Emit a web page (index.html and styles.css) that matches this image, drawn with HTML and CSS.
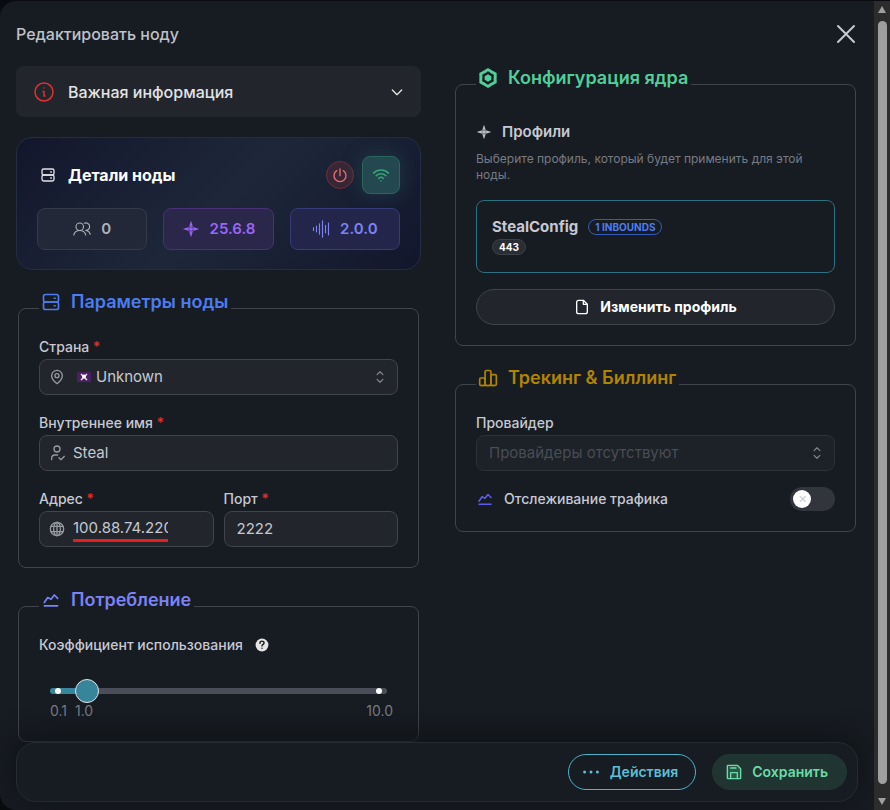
FILE: index.html
```html
<!DOCTYPE html>
<html lang="ru">
<head>
<meta charset="utf-8">
<meta name="viewport" content="width=device-width, initial-scale=1">
<title>Редактировать ноду</title>
<link rel="stylesheet" href="styles.css">
</head>
<body>
<svg class="sprite" aria-hidden="true">
  <symbol id="chart" viewBox="0 0 24 24"><path d="M4 19h16M4 15l4-6 4 2 4-5 4 4"/></symbol>
  <symbol id="updown" viewBox="0 0 24 24"><path d="M7 8l5-5 5 5M7 16l5 5 5-5"/></symbol>
  <symbol id="server" viewBox="0 0 24 24"><rect x="3" y="3" width="18" height="9" rx="2.500"/><rect x="3" y="12" width="18" height="9" rx="2.500"/><path d="M16 7.500h1M16 16.500h1"/></symbol>
  <symbol id="star" viewBox="0 0 24 24"><path fill="currentColor" stroke="none" fill-rule="evenodd" d="M12 1l2.600 8.400L23 12l-8.400 2.600L12 23l-2.600-8.400L1 12l8.400-2.600zM11 7l-1 3-3 1h4zM13 7v4h4l-3-1zM7 13l3 1 1 3v-4zM13 13v4l1-3 3-1z"/></symbol>
</svg>
<main class="dialog" role="dialog" aria-labelledby="title">
  <header class="header">
    <h1 id="title">Редактировать ноду</h1>
    <button class="close" type="button" aria-label="Закрыть"><svg class="icon i24" viewBox="0 0 24 24"><path d="M4 4l16 16M20 4L4 20"/></svg></button>
  </header>
  <form class="form">
    <div class="columns">
      <div class="column">
        <button class="info" type="button" aria-expanded="false">
          <svg class="icon i24 danger" viewBox="0 0 24 24"><circle cx="12" cy="12" r="9"/><path d="M12 8v0.100M11 11.500h1V16h1"/></svg>
          <span>Важная информация</span>
          <svg class="icon i16" viewBox="0 0 24 24"><path d="M5 9l7 7 7-7"/></svg>
        </button>
        <section class="details">
          <div class="details-head">
            <svg class="icon i16" viewBox="0 0 24 24"><use href="#server"/></svg>
            <h2>Детали ноды</h2>
            <button class="power" type="button" aria-label="Отключить"><svg class="icon i16" viewBox="0 0 24 24"><path d="M7 5.500a9 9 0 1 0 10 0M12 3v10"/></svg></button>
            <button class="online" type="button" aria-label="Подключение"><svg class="icon i18" viewBox="0 0 24 24"><path d="M2 9.500c5.500-5.500 14.500-5.500 20 0M5.500 13c3.600-3.600 9.400-3.600 13 0M9 16.500c1.700-1.700 4.300-1.700 6 0M12 20v0.100"/></svg></button>
          </div>
          <div class="stats">
            <div class="stat"><svg class="icon i18" viewBox="0 0 24 24"><circle cx="9" cy="9" r="5"/><path d="M1 20c1-4 4-6 8-6s7 2 8 6M15 4.300a5 5 0 1 1 2 9.500M18 14c3 1 4.500 3 5 5"/></svg><span>0</span></div>
            <div class="stat violet"><svg class="icon i18"><use href="#star"/></svg><span>25.6.8</span></div>
            <div class="stat indigo"><svg class="icon i18" viewBox="0 0 24 24"><path d="M2 10v4M6 8v8M10 5v14M14 1v22M18 7v10M22 4v16"/></svg><span>2.0.0</span></div>
          </div>
        </section>
        <fieldset>
          <legend class="blue"><svg class="icon i20" viewBox="0 0 24 24"><use href="#server"/></svg><span>Параметры ноды</span></legend>
          <div class="fields">
            <div class="field wide">
              <label for="country">Страна <b>*</b></label>
              <div class="control">
                <svg class="icon i16" viewBox="0 0 24 24"><path d="M12 22s-8-6-8-12a8 8 0 0 1 16 0c0 6-8 12-8 12z"/><circle cx="12" cy="10" r="3"/></svg>
                <svg class="flag" viewBox="0 0 14 10"><path fill="#4a2063" d="M0 0h14v10H0z"/><path stroke="#e4dcea" stroke-width="1.500" d="M4 2l6 6M10 2L4 8"/><circle cx="7" cy="4.500" r="2" fill="#fff"/></svg>
                <select id="country"><option>Unknown</option></select>
                <svg class="icon i14"><use href="#updown"/></svg>
              </div>
            </div>
            <div class="field wide">
              <label for="name">Внутреннее имя <b>*</b></label>
              <div class="control">
                <svg class="icon i16" viewBox="0 0 24 24"><circle cx="12" cy="6" r="4.500"/><path d="M4 22v-2c0-3 2-5 5-5h4M15 19l3 3 5-5"/></svg>
                <input id="name" type="text" value="Steal">
              </div>
            </div>
            <div class="field">
              <label for="address">Адрес <b>*</b></label>
              <div class="control">
                <svg class="icon i16" viewBox="0 0 24 24"><circle cx="12" cy="12" r="10"/><ellipse cx="12" cy="12" rx="5" ry="10"/><path d="M3 8h18M3 16h18M12 2v20"/></svg>
                <span class="marked"><input id="address" type="text" value="100.88.74.220"></span>
              </div>
            </div>
            <div class="field">
              <label for="port">Порт <b>*</b></label>
              <div class="control"><input id="port" type="text" value="2222"></div>
            </div>
          </div>
        </fieldset>
        <fieldset>
          <legend class="indigo-text"><svg class="icon i20"><use href="#chart"/></svg><span>Потребление</span></legend>
          <div class="usage">
            <label for="ratio">Коэффициент использования</label>
            <svg class="help" viewBox="0 0 24 24" aria-hidden="true"><circle cx="12" cy="12" r="11" fill="#e4e4e6"/><path fill="none" stroke="#171b22" stroke-width="2.500" stroke-linecap="round" d="M8.500 9c0-5 7-4.500 7-.5 0 2.500-3.500 2.500-3.500 5M12 17.500v0.100"/></svg>
          </div>
          <div class="slider">
            <div class="track"><i></i><i></i></div>
            <input id="ratio" type="range" min="0.1" max="10" step="0.1" value="1">
          </div>
          <div class="ticks"><span>0.1</span><span>1.0</span><span>10.0</span></div>
        </fieldset>
      </div>
      <div class="column">
        <fieldset>
          <legend class="green"><svg class="icon i20" viewBox="0 0 24 24"><g fill="currentColor" stroke="none"><path id="blade" d="M12 0l6 3.500v4L12 4l-4 2.300V2.300z"/><use href="#blade" transform="rotate(60 12 12)"/><use href="#blade" transform="rotate(120 12 12)"/><use href="#blade" transform="rotate(180 12 12)"/><use href="#blade" transform="rotate(240 12 12)"/><use href="#blade" transform="rotate(300 12 12)"/><path d="M12 7.500l4 2.300v4.400l-4 2.300-4-2.300V9.800z"/></g></svg><span>Конфигурация ядра</span></legend>
          <div class="profiles-title"><svg class="icon i16"><use href="#star"/></svg><h3>Профили</h3></div>
          <p class="hint">Выберите профиль, который будет применить для этой ноды.</p>
          <article class="profile">
            <div class="profile-head"><strong>StealConfig</strong><span class="badge outline">1 INBOUNDS</span></div>
            <span class="badge">443</span>
          </article>
          <button class="change" type="button"><svg class="icon i16" viewBox="0 0 24 24"><path d="M14 2H7a3 3 0 0 0-3 3v14a3 3 0 0 0 3 3h10a3 3 0 0 0 3-3V8zM14 2v6h6"/></svg><span>Изменить профиль</span></button>
        </fieldset>
        <fieldset>
          <legend class="amber"><svg class="icon i20" viewBox="0 0 24 24"><rect x="2" y="12" width="6.500" height="9" rx="1.500"/><rect x="8.500" y="3" width="7" height="18" rx="1.500"/><rect x="15.500" y="8" width="6.500" height="13" rx="1.500"/><path d="M4 21h16"/></svg><span>Трекинг &amp; Биллинг</span></legend>
          <div class="field">
            <label for="provider">Провайдер</label>
            <div class="control disabled">
              <select id="provider" disabled><option>Провайдеры отсутствуют</option></select>
              <svg class="icon i14"><use href="#updown"/></svg>
            </div>
          </div>
          <div class="tracking">
            <svg class="icon i18"><use href="#chart"/></svg>
            <label for="tracking">Отслеживание трафика</label>
            <input id="tracking" class="switch" type="checkbox" role="switch">
          </div>
        </fieldset>
      </div>
    </div>
    <footer class="footer">
      <button class="actions" type="button"><svg class="icon i18" viewBox="0 0 24 24"><g fill="currentColor" stroke="none"><circle cx="3.500" cy="12" r="2"/><circle cx="12" cy="12" r="2"/><circle cx="20.500" cy="12" r="2"/></g></svg><span>Действия</span></button>
      <button class="save" type="submit"><svg class="icon i16" viewBox="0 0 24 24"><path fill="currentColor" fill-opacity=".2" d="M2 3a1 1 0 0 1 1-1h14l5 5v14a1 1 0 0 1-1 1H3a1 1 0 0 1-1-1z"/><path d="M7 22v-9h10v9M7 6h8"/></svg><span>Сохранить</span></button>
    </footer>
  </form>
</main>
<div class="scrollbar" aria-hidden="true">
  <svg viewBox="0 0 16 14"><path d="M8 2l4 7H4z"/></svg>
  <i></i>
  <svg viewBox="0 0 16 14"><path d="M8 12L4 5h8z"/></svg>
</div>
</body>
</html>
```
FILE: styles.css
```css
* { box-sizing: border-box; }
body {
  margin: 0;
  min-height: 100vh;
  display: flex;
  background: #0a0b0e;
  color: #c6c9d2;
  font: 500 15px/24px Inter, "Noto Sans", sans-serif;
}
h1, h2, h3, p { margin: 0; }
button, input, select { font: inherit; color: inherit; margin: 0; }
button { padding: 0; border: 0; background: none; cursor: pointer; }
.sprite { display: none; }
.icon {
  flex: none;
  fill: none;
  stroke: currentColor;
  stroke-width: 2;
  stroke-linecap: round;
  stroke-linejoin: round;
}
.i14 { width: 14px; height: 14px; }
.i16 { width: 16px; height: 16px; }
.i18 { width: 18px; height: 18px; }
.i20 { width: 20px; height: 20px; }
.i24 { width: 24px; height: 24px; }

.dialog {
  flex: 1;
  min-width: 0;
  margin-top: 1px;
  border-radius: 16px 0 0 16px;
  background: #171b22;
  display: flex;
  flex-direction: column;
}
.header {
  display: flex;
  align-items: center;
  justify-content: space-between;
  height: 65px;
  padding: 0 16px;
}
.header h1 { font-size: 16px; font-weight: 500; color: #bfc2c9; }
.close { display: flex; color: #c6c9d2; }
.form { flex: 1; display: flex; flex-direction: column; }
.columns {
  flex: 1;
  display: grid;
  grid-template-columns: repeat(2, minmax(0, 1fr));
  gap: 32px;
  padding: 0 16px;
}
.column { display: flex; flex-direction: column; gap: 20px; }

.info {
  display: flex;
  align-items: center;
  gap: 12px;
  height: 51px;
  padding: 0 16px;
  border-radius: 8px;
  background: #22262c;
  color: #e3e3e5;
  font-size: 16px;
  text-align: left;
}
.info span { flex: 1; }
.danger { color: #e03131; stroke-width: 1.500; }

.details {
  height: 133px;
  padding: 18px 20px;
  border: 1px solid #252d42;
  border-radius: 16px;
  background: linear-gradient(135deg, #12162c 0%, #1e273a 50%, #12162c 100%);
}
.details-head { display: flex; align-items: center; gap: 8px; height: 38px; margin-bottom: 14px; }
.details-head > .icon { margin: 0 4px 0 3px; color: #e3e3e5; }
.details h2 { flex: 1; font-size: 16px; font-weight: 700; color: #fff; }
.power, .online { display: grid; place-items: center; }
.power {
  width: 28px;
  height: 28px;
  border: 1px solid #6d2f3a;
  border-radius: 50%;
  background: #382636;
  color: #e87070;
}
.online {
  width: 38px;
  height: 38px;
  border: 1px solid #2a665f;
  border-radius: 8px;
  background: #24484f;
  color: #35a277;
  box-shadow: 0 0 20px #2a6a6666;
}
.stats { display: grid; grid-template-columns: repeat(3, 1fr); gap: 16px; }
.stat {
  display: flex;
  align-items: center;
  justify-content: center;
  gap: 10px;
  height: 42px;
  border: 1px solid #353b4a;
  border-radius: 8px;
  background: #222838;
  color: #aeb2b9;
  font-weight: 600;
}
.stat .icon { stroke-width: 1.500; }
.violet { border-color: #4a3076; background: #2b274a; color: #9a66f5; }
.indigo { border-color: #373b78; background: #23254a; color: #7b83f5; }

fieldset {
  min-width: 0;
  margin: 0 2px;
  padding: 9px 20px 20px;
  border: 1px solid #41444a;
  border-radius: 8px;
}
legend {
  display: flex;
  align-items: center;
  gap: 10px;
  padding: 0 3px 12px 2px;
  font-size: 18px;
  font-weight: 600;
}
.blue { color: #4c7df0; }
.indigo-text { color: #7b83f5; }
.green { color: #51cf98; }
.amber { color: #b08400; }
.fields { display: grid; grid-template-columns: 1fr 1fr; gap: 16px 10px; }
.wide { grid-column: 1 / -1; }
.field { min-width: 0; }
.field label { display: block; font-size: 14px; }
.field b { color: #e03131; font-weight: 500; }
.control {
  display: flex;
  align-items: center;
  gap: 8px;
  height: 36px;
  padding: 0 9px;
  border: 1px solid #41444a;
  border-radius: 8px;
  background: #22262c;
}
.control .icon { color: #9599a1; }
.control .i14 { margin-right: 1px; color: #84878e; }
.control input, .control select {
  flex: 1;
  min-width: 0;
  width: 100%;
  height: 24px;
  padding: 0;
  border: 0;
  outline: 0;
  background: none;
  appearance: none;
  font-weight: 400;
  opacity: 1;
}
.control > :first-child:not(.icon) { padding-left: 3px; }
.flag { width: 14px; height: 10px; margin-left: 4px; margin-right: -3px; }
.marked { width: 95px; height: 26px; border-bottom: 3px solid #e81e1e; }
.disabled { border-color: #2e3238; background: #1d2128; color: #494d54; }

.usage { display: flex; align-items: center; gap: 12px; padding-top: 0; font-size: 14px; }
.usage, .slider { margin-left: 0; }
.help { width: 14px; height: 14px; }
.slider { display: grid; align-items: center; height: 24px; margin: 22px 7px 0; }
.slider > * { grid-area: 1 / 1; }
.track {
  display: flex;
  justify-content: space-between;
  align-items: center;
  height: 6px;
  margin: 0 4px;
  padding: 0 5px;
  border-radius: 3px;
  background: linear-gradient(90deg, #36859b 11%, #4b4e58 11%);
}
.track i { width: 6px; height: 6px; border-radius: 50%; background: #fff; }
.slider input { width: 100%; height: 24px; margin: 0; appearance: none; background: none; }
.slider input::-webkit-slider-thumb {
  appearance: none;
  width: 24px;
  height: 24px;
  border: 1px solid #e3e3e5;
  border-radius: 50%;
  background: #36859b;
}
.ticks { display: flex; height: 18px; margin: 0 5px 0 11px; color: #777b83; font-size: 14px; line-height: 16px; font-weight: 400; gap: 8px; }
.ticks span:last-child { margin-left: auto; }

.profiles-title { display: flex; align-items: center; gap: 10px; margin-top: 9px; }
.profiles-title h3 { font-size: 15px; font-weight: 600; }
.hint { margin: 7px 0 17px; color: #777b83; font-size: 12px; line-height: 16px; font-weight: 400; }
.profile { height: 73px; padding: 14px 15px; border: 1px solid #2a7183; border-radius: 8px; }
.profile-head { display: flex; align-items: center; gap: 10px; }
.profile strong { font-size: 15px; font-weight: 700; }
.badge {
  display: block;
  width: max-content;
  padding: 0 6px;
  border: 1px solid #3b3f46;
  border-radius: 8px;
  background: #292d34;
  color: #fff;
  font-size: 10px;
  line-height: 14px;
  font-weight: 700;
}
.outline { border-color: #365bb8; background: none; color: #4c7df0; }
.change {
  display: flex;
  align-items: center;
  justify-content: center;
  gap: 10px;
  width: 100%;
  height: 36px;
  margin-top: 16px;
  border: 1px solid #41444a;
  border-radius: 18px;
  background: #22262c;
  color: #fff;
  font-size: 14px;
  font-weight: 700;
}
.tracking { display: flex; align-items: center; gap: 10px; height: 24px; margin-top: 16px; font-size: 14px; }
.tracking .icon { color: #5c5cf0; }
.tracking label { flex: 1; }
.switch {
  display: flex;
  align-items: center;
  width: 45px;
  height: 24px;
  padding: 0 3px;
  border-radius: 12px;
  background: #32353c;
  appearance: none;
}
.switch::before {
  content: "✕";
  width: 18px;
  height: 18px;
  border-radius: 50%;
  background: #fff;
  color: #c9cdd6;
  font-size: 11px;
  line-height: 18px;
  text-align: center;
}

.footer {
  position: sticky;
  bottom: 8px;
  display: flex;
  align-items: center;
  justify-content: flex-end;
  gap: 16px;
  height: 60px;
  margin: 0 16px 8px;
  padding: 0 10px;
  border: 1px solid #272b31;
  border-radius: 20px;
  background: #171b22;
  box-shadow: 0 -4px 28px #0f1113;
}
.footer button {
  display: flex;
  align-items: center;
  justify-content: center;
  gap: 10px;
  height: 36px;
  padding: 0 17px 0 13px;
  border: 1px solid #203833;
  border-radius: 18px;
  font-size: 14px;
  font-weight: 600;
}
.footer .actions { border-color: #4fb3ca; color: #5bbfd5; }
.footer .save { background: #203531; color: #69dba8; padding-right: 18px; }

.scrollbar {
  display: flex;
  flex-direction: column;
  align-items: center;
  justify-content: space-between;
  position: sticky;
  top: 0;
  width: 16px;
  height: 100vh;
  border-top: 1px solid #0a0b0e;
  background: #2c2c2c;
}
.scrollbar svg { width: 16px; height: 20px; fill: #9f9f9f; }
.scrollbar i { flex: 1; width: 9px; margin-bottom: 6px; border-radius: 5px; background: #9f9f9f; }
```
